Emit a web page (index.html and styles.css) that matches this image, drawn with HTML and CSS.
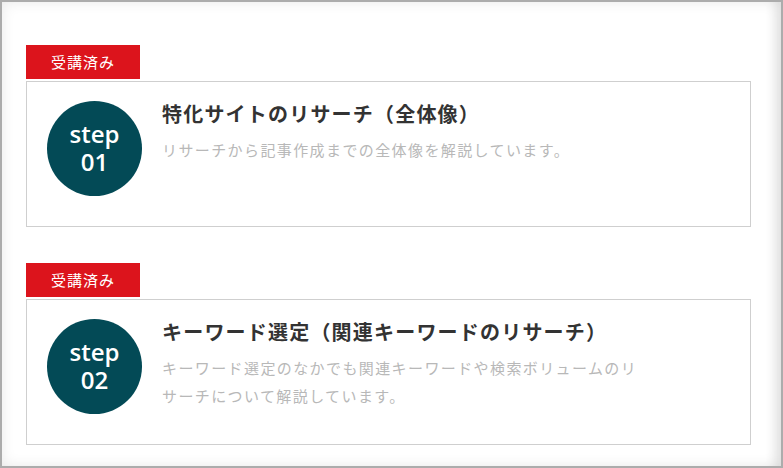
FILE: index.html
```html
<!DOCTYPE html>
<html lang="ja">
<head>
    <meta charset="UTF-8">
    <meta name="viewport" content="width=device-width, initial-scale=1.0">
    <title>講座ステップ一覧</title>
    <link rel="stylesheet" href="styles.css">
</head>
<body>
    <div class="page">
        <div class="step-block">
            <div class="badge">受講済み</div>
            <div class="step-card">
                <div class="step-circle">step<br>01</div>
                <div class="step-body">
                    <h3 class="step-title">特化サイトのリサーチ（全体像）</h3>
                    <p class="step-desc">リサーチから記事作成までの全体像を解説しています。</p>
                </div>
            </div>
        </div>

        <div class="step-block">
            <div class="badge">受講済み</div>
            <div class="step-card">
                <div class="step-circle">step<br>02</div>
                <div class="step-body">
                    <h3 class="step-title">キーワード選定（関連キーワードのリサーチ）</h3>
                    <p class="step-desc">キーワード選定のなかでも関連キーワードや検索ボリュームのリサーチについて解説しています。</p>
                </div>
            </div>
        </div>
    </div>
</body>
</html>
```

FILE: styles.css
```css
html, body {
    margin: 0;
    padding: 0;
    background-color: #fff;
}
body {
    font-family: "Noto Sans CJK JP", "Noto Sans", sans-serif;
    color: #333;
}
.page {
    width: 783px;
    height: 468px;
    box-sizing: border-box;
    border: 2px solid #acacac;
    box-shadow: inset 0 0 14px rgba(0, 0, 0, 0.09), inset -14px 0 10px -6px rgba(0, 0, 0, 0.07);
    padding: 43px 30px 0 24px;
    display: flex;
    flex-direction: column;
    gap: 36px;
    overflow: hidden;
}
.badge {
    width: 114px;
    height: 34px;
    background-color: #dc141c;
    color: #fff;
    font-size: 15px;
    line-height: 34px;
    letter-spacing: 1px;
    text-align: center;
    margin-bottom: 2px;
}
.step-card {
    display: flex;
    gap: 20px;
    height: 146px;
    box-sizing: border-box;
    border: 1px solid #cfcfcf;
    padding: 19px 20px 0 20px;
}
.step-circle {
    width: 95px;
    height: 95px;
    flex-shrink: 0;
    border-radius: 50%;
    background-color: #034a56;
    color: #fff;
    font-family: "Open Sans", sans-serif;
    font-weight: 600;
    font-size: 24px;
    line-height: 28px;
    text-align: center;
    display: flex;
    align-items: center;
    justify-content: center;
    padding-bottom: 2px;
    box-sizing: border-box;
}
.step-body {
    padding-top: 1px;
}
.step-title {
    margin: 0 0 10px 0;
    font-size: 20px;
    font-weight: bold;
    line-height: 24px;
    letter-spacing: 1.2px;
    color: #333;
}
.step-desc {
    margin: 0;
    max-width: 482px;
    font-size: 15px;
    line-height: 28px;
    letter-spacing: 1.4px;
    color: #b8b8b8;
}
```
